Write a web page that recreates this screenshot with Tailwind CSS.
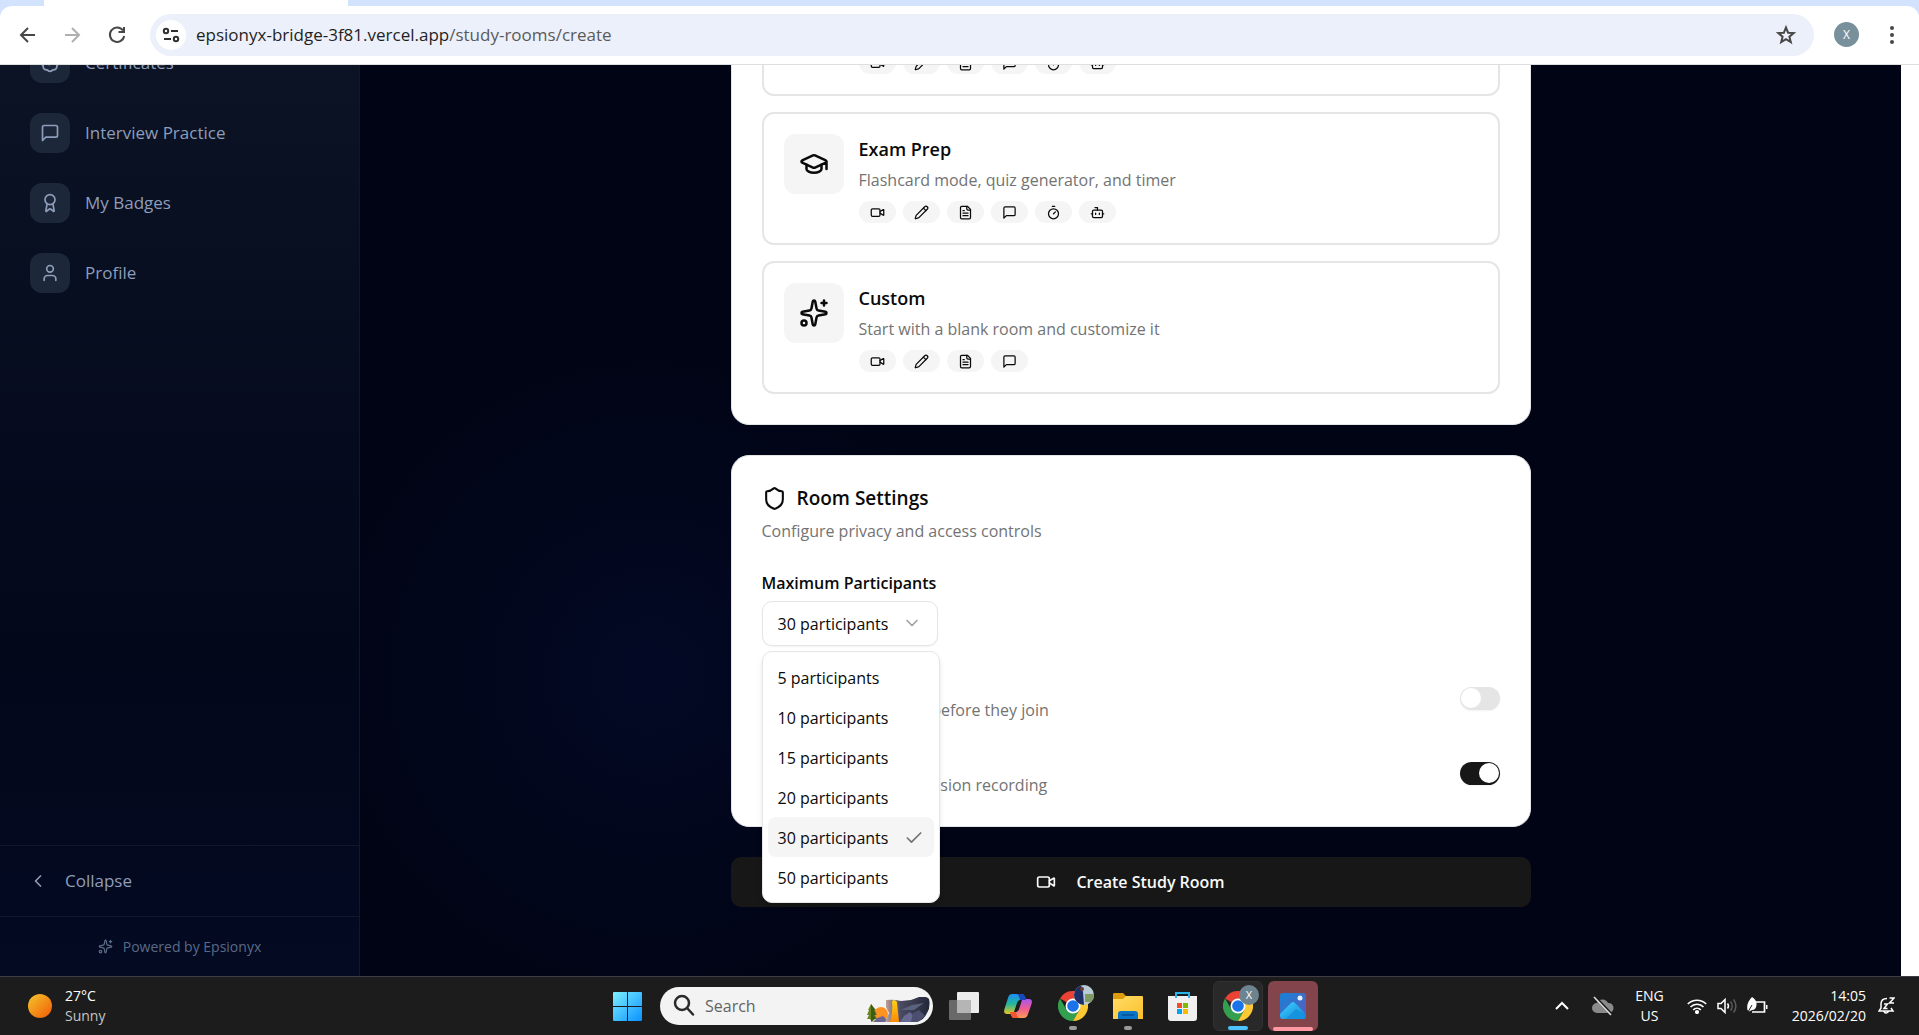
<!DOCTYPE html>
<html lang="en">
  <head>
    <meta charset="UTF-8" />
    <meta name="viewport" content="width=device-width, initial-scale=1.0" />
    <title>Create Study Room</title>
    <script src="https://cdn.jsdelivr.net/npm/@tailwindcss/browser@4"></script>
  </head>
  <body
    class="h-screen flex flex-col overflow-hidden bg-white font-['Open_Sans','Noto_Sans',sans-serif] text-base text-neutral-950"
  >
    <!-- Icon set -->
    <svg class="hidden">
      <defs>
        <symbol id="i-video" viewBox="0 0 24 24">
          <path d="m16 13 5.223 3.482a.5.5 0 0 0 .777-.416V7.87a.5.5 0 0 0-.752-.432L16 10.5" />
          <rect x="2" y="6" width="14" height="12" rx="2" />
        </symbol>
        <symbol id="i-pencil" viewBox="0 0 24 24">
          <path d="M21.174 6.812a1 1 0 0 0-3.986-3.987L3.842 16.174a2 2 0 0 0-.5.83l-1.321 4.352a.5.5 0 0 0 .623.622l4.353-1.32a2 2 0 0 0 .83-.497z" />
          <path d="m15 5 4 4" />
        </symbol>
        <symbol id="i-file" viewBox="0 0 24 24">
          <path d="M15 2H6a2 2 0 0 0-2 2v16a2 2 0 0 0 2 2h12a2 2 0 0 0 2-2V7Z" />
          <path d="M14 2v4a2 2 0 0 0 2 2h4M10 9H8M16 13H8M16 17H8" />
        </symbol>
        <symbol id="i-message" viewBox="0 0 24 24">
          <path d="M21 15a2 2 0 0 1-2 2H7l-4 4V5a2 2 0 0 1 2-2h14a2 2 0 0 1 2 2z" />
        </symbol>
        <symbol id="i-timer" viewBox="0 0 24 24">
          <path d="M10 2h4M12 14l3-3" />
          <circle cx="12" cy="14" r="8" />
        </symbol>
        <symbol id="i-bot" viewBox="0 0 24 24">
          <path d="M12 8V4H8M2 14h2M20 14h2M15 13v2M9 13v2" />
          <rect x="4" y="8" width="16" height="12" rx="2" />
        </symbol>
        <symbol id="i-cap" viewBox="0 0 24 24">
          <path d="M21.42 10.922a1 1 0 0 0-.019-1.838L12.83 5.18a2 2 0 0 0-1.66 0L2.6 9.08a1 1 0 0 0 0 1.832l8.57 3.908a2 2 0 0 0 1.66 0zM22 10v6" />
          <path d="M6 12.5V16a6 3 0 0 0 12 0v-3.5" />
        </symbol>
        <symbol id="i-sparkles" viewBox="0 0 24 24">
          <path d="M11.017 2.814a1 1 0 0 1 1.966 0l1.051 5.558a2 2 0 0 0 1.594 1.594l5.558 1.051a1 1 0 0 1 0 1.966l-5.558 1.051a2 2 0 0 0-1.594 1.594l-1.051 5.558a1 1 0 0 1-1.966 0l-1.051-5.558a2 2 0 0 0-1.594-1.594l-5.558-1.051a1 1 0 0 1 0-1.966l5.558-1.051a2 2 0 0 0 1.594-1.594z" />
          <path d="M20 2v4M22 4h-4" />
          <circle cx="4" cy="20" r="2" />
        </symbol>
        <symbol id="i-badge" viewBox="0 0 24 24">
          <path d="M3.85 8.62a4 4 0 0 1 4.78-4.77 4 4 0 0 1 6.74 0 4 4 0 0 1 4.78 4.78 4 4 0 0 1 0 6.74 4 4 0 0 1-4.77 4.78 4 4 0 0 1-6.75 0 4 4 0 0 1-4.78-4.77 4 4 0 0 1 0-6.76Z" />
          <path d="m9 12 2 2 4-4" />
        </symbol>
        <symbol id="i-award" viewBox="0 0 24 24">
          <path d="m15.477 12.89 1.515 8.526a.5.5 0 0 1-.81.47l-3.58-2.687a1 1 0 0 0-1.197 0l-3.586 2.686a.5.5 0 0 1-.81-.469l1.514-8.526" />
          <circle cx="12" cy="8" r="6" />
        </symbol>
        <symbol id="i-user" viewBox="0 0 24 24">
          <path d="M19 21v-2a4 4 0 0 0-4-4H9a4 4 0 0 0-4 4v2" />
          <circle cx="12" cy="7" r="4" />
        </symbol>
        <symbol id="i-shield" viewBox="0 0 24 24">
          <path d="M20 13c0 5-3.5 7.5-7.66 8.95a1 1 0 0 1-.67-.01C7.5 20.5 4 18 4 13V6a1 1 0 0 1 1-1c2 0 4.5-1.2 6.24-2.72a1.17 1.17 0 0 1 1.52 0C14.51 3.81 17 5 19 5a1 1 0 0 1 1 1z" />
        </symbol>
        <symbol id="i-chrome" viewBox="0 0 30 30">
          <path d="M15 15 2 7.500A15 15 0 0 1 28 7.500L15 7.500Z" fill="#ea4335" />
          <path d="M2 7.500A15 15 0 0 0 15 30L21.500 18.700 15 15 8.500 18.700Z" fill="#34a04f" />
          <path d="M28 7.500A15 15 0 0 1 15 30L21.500 18.750 15 7.500Z" fill="#fcc934" />
          <circle cx="15" cy="15" r="7.500" fill="#fff" />
          <circle cx="15" cy="15" r="5.800" fill="#1a73e8" />
        </symbol>
      </defs>
    </svg>

    <!-- Browser chrome -->
    <header class="shrink-0 bg-[#d3e3fd]">
      <div class="flex h-[6px] pl-11">
        <div class="w-[304px] bg-white"></div>
      </div>
      <div class="flex items-center h-[59px] pb-px pl-4 pr-[17px] bg-white rounded-t-xl border-b border-[#dfdfdf]">
        <button aria-label="Back" class="w-6 mr-5">
          <svg class="size-6" viewBox="0 0 24 24" fill="none" stroke="#474747" stroke-width="2"><path d="M19 12H5M12 5l-7 7 7 7" /></svg>
        </button>
        <button aria-label="Forward" class="w-6 mr-[21px]">
          <svg class="size-6" viewBox="0 0 24 24" fill="none" stroke="#b0b0b0" stroke-width="2"><path d="M5 12h14M12 5l7 7-7 7" /></svg>
        </button>
        <button aria-label="Reload" class="w-6 mr-[21px]">
          <svg class="size-6" viewBox="0 0 24 24" fill="none" stroke="#474747" stroke-width="2"><path d="M18 7.500A7.200 7.200 0 1 0 19.200 13M19 4v5h-5.500" /></svg>
        </button>
        <div class="flex flex-1 items-center h-[42px] pl-[6px] pr-4 rounded-full bg-[#ecf0fa]">
          <button aria-label="Site information" class="flex items-center justify-center size-[30px] mr-2.5 rounded-full bg-white">
            <svg class="size-5" viewBox="0 0 20 20" fill="none" stroke="#303030" stroke-width="2"><circle cx="5" cy="6" r="2.200" /><path d="M10 6h7M3 14h7" /><circle cx="15" cy="14" r="2.200" /></svg>
          </button>
          <div class="flex-1 text-[17px]"><span class="text-[#1f1f1f]">epsionyx-bridge-3f81.vercel.app</span><span class="text-[#5a5a5a]">/study-rooms/create</span></div>
          <button aria-label="Bookmark">
            <svg class="size-6" viewBox="0 0 24 24" fill="none" stroke="#474747" stroke-width="2"><path d="m12 4.500 2.100 5.200 5.600.4-4.300 3.600 1.400 5.500-4.800-3-4.800 3 1.400-5.500-4.300-3.600 5.600-.4z" /></svg>
          </button>
        </div>
        <button class="flex items-center justify-center size-[25px] ml-5 rounded-full bg-[#78909c] text-[12px] text-white">X</button>
        <button aria-label="Menu" class="ml-[23px]">
          <svg class="w-5 h-6" viewBox="0 0 20 24" fill="#474747"><circle cx="10" cy="5" r="2" /><circle cx="10" cy="12" r="2" /><circle cx="10" cy="19" r="2" /></svg>
        </button>
      </div>
    </header>

    <div class="flex flex-1 min-h-0 pr-[18px]">
      <!-- Sidebar -->
      <aside class="flex flex-col shrink-0 w-[360px] border-r border-[#10182a] bg-linear-to-b from-[#0b1324] via-[#03071a] via-65% to-[#030a22] text-[17px] text-[#8e9dba] font-medium">
        <nav class="flex-1 min-h-0 overflow-hidden pl-[30px]">
          <ul class="-mt-[22px] flex flex-col gap-[30px]">
            <li>
              <a href="#certificates" class="flex items-center gap-[15px]">
                <span class="flex items-center justify-center size-10 rounded-xl bg-[#1c283a]"><svg class="size-5" fill="none" stroke="currentColor" stroke-width="2" stroke-linecap="round" stroke-linejoin="round"><use href="#i-badge" /></svg></span>
                Certificates
              </a>
            </li>
            <li>
              <a href="#interview" class="flex items-center gap-[15px]">
                <span class="flex items-center justify-center size-10 rounded-xl bg-[#1c283a]"><svg class="size-5" fill="none" stroke="currentColor" stroke-width="2" stroke-linecap="round" stroke-linejoin="round"><use href="#i-message" /></svg></span>
                Interview Practice
              </a>
            </li>
            <li>
              <a href="#badges" class="flex items-center gap-[15px]">
                <span class="flex items-center justify-center size-10 rounded-xl bg-[#1c283a]"><svg class="size-5" fill="none" stroke="currentColor" stroke-width="2" stroke-linecap="round" stroke-linejoin="round"><use href="#i-award" /></svg></span>
                My Badges
              </a>
            </li>
            <li>
              <a href="#profile" class="flex items-center gap-[15px]">
                <span class="flex items-center justify-center size-10 rounded-xl bg-[#1c283a]"><svg class="size-5" fill="none" stroke="currentColor" stroke-width="2" stroke-linecap="round" stroke-linejoin="round"><use href="#i-user" /></svg></span>
                Profile
              </a>
            </li>
          </ul>
        </nav>
        <div class="border-t border-[#10182a] h-[71px] flex items-center pl-7">
          <button class="flex items-center gap-[17px]">
            <svg class="size-5" viewBox="0 0 24 24" fill="none" stroke="currentColor" stroke-width="2" stroke-linecap="round" stroke-linejoin="round"><path d="m15 18-6-6 6-6" /></svg>
            Collapse
          </button>
        </div>
        <div class="border-t border-[#10182a] h-[60px] flex items-center justify-center gap-2.5 text-sm font-normal text-[#5b6a85]">
          <svg class="size-[15px]" fill="none" stroke="currentColor" stroke-width="2" stroke-linecap="round" stroke-linejoin="round"><use href="#i-sparkles" /></svg>
          Powered by Epsionyx
        </div>
      </aside>

      <!-- Page content, scrolled to its end -->
      <main class="flex flex-1 flex-col items-center justify-end min-w-0 overflow-hidden pb-[69px] bg-[#010414] bg-[radial-gradient(circle_340px_at_290px_610px,#030925,#010414)]">
        <form class="flex flex-col gap-[30px] w-full max-w-[800px]">
          <section class="flex flex-col gap-4 rounded-[18px] border border-neutral-200 bg-white p-[30px]">
            <article class="flex gap-[15px] rounded-xl border-2 border-neutral-200 p-5">
              <div class="size-[60px] shrink-0"></div>
              <div class="pt-[67px]">
                <ul class="flex gap-[7px]">
                  <li class="flex items-center justify-center w-[37px] h-[22px] rounded-full bg-neutral-100"><svg class="size-[15px]" fill="none" stroke="currentColor" stroke-width="2" stroke-linecap="round" stroke-linejoin="round"><use href="#i-video" /></svg></li>
                  <li class="flex items-center justify-center w-[37px] h-[22px] rounded-full bg-neutral-100"><svg class="size-[15px]" fill="none" stroke="currentColor" stroke-width="2" stroke-linecap="round" stroke-linejoin="round"><use href="#i-pencil" /></svg></li>
                  <li class="flex items-center justify-center w-[37px] h-[22px] rounded-full bg-neutral-100"><svg class="size-[15px]" fill="none" stroke="currentColor" stroke-width="2" stroke-linecap="round" stroke-linejoin="round"><use href="#i-file" /></svg></li>
                  <li class="flex items-center justify-center w-[37px] h-[22px] rounded-full bg-neutral-100"><svg class="size-[15px]" fill="none" stroke="currentColor" stroke-width="2" stroke-linecap="round" stroke-linejoin="round"><use href="#i-message" /></svg></li>
                  <li class="flex items-center justify-center w-[37px] h-[22px] rounded-full bg-neutral-100"><svg class="size-[15px]" fill="none" stroke="currentColor" stroke-width="2" stroke-linecap="round" stroke-linejoin="round"><use href="#i-timer" /></svg></li>
                  <li class="flex items-center justify-center w-[37px] h-[22px] rounded-full bg-neutral-100"><svg class="size-[15px]" fill="none" stroke="currentColor" stroke-width="2" stroke-linecap="round" stroke-linejoin="round"><use href="#i-bot" /></svg></li>
                </ul>
              </div>
            </article>

            <article class="flex gap-[15px] rounded-xl border-2 border-neutral-200 p-5">
              <div class="flex items-center justify-center size-[60px] shrink-0 rounded-xl bg-neutral-100">
                <svg class="size-[30px]" fill="none" stroke="currentColor" stroke-width="2" stroke-linecap="round" stroke-linejoin="round"><use href="#i-cap" /></svg>
              </div>
              <div>
                <h3 class="text-lg leading-[30px] font-semibold">Exam Prep</h3>
                <p class="mt-1 leading-[25px] text-neutral-500">Flashcard mode, quiz generator, and timer</p>
                <ul class="mt-2 flex gap-[7px]">
                  <li class="flex items-center justify-center w-[37px] h-[22px] rounded-full bg-neutral-100"><svg class="size-[15px]" fill="none" stroke="currentColor" stroke-width="2" stroke-linecap="round" stroke-linejoin="round"><use href="#i-video" /></svg></li>
                  <li class="flex items-center justify-center w-[37px] h-[22px] rounded-full bg-neutral-100"><svg class="size-[15px]" fill="none" stroke="currentColor" stroke-width="2" stroke-linecap="round" stroke-linejoin="round"><use href="#i-pencil" /></svg></li>
                  <li class="flex items-center justify-center w-[37px] h-[22px] rounded-full bg-neutral-100"><svg class="size-[15px]" fill="none" stroke="currentColor" stroke-width="2" stroke-linecap="round" stroke-linejoin="round"><use href="#i-file" /></svg></li>
                  <li class="flex items-center justify-center w-[37px] h-[22px] rounded-full bg-neutral-100"><svg class="size-[15px]" fill="none" stroke="currentColor" stroke-width="2" stroke-linecap="round" stroke-linejoin="round"><use href="#i-message" /></svg></li>
                  <li class="flex items-center justify-center w-[37px] h-[22px] rounded-full bg-neutral-100"><svg class="size-[15px]" fill="none" stroke="currentColor" stroke-width="2" stroke-linecap="round" stroke-linejoin="round"><use href="#i-timer" /></svg></li>
                  <li class="flex items-center justify-center w-[37px] h-[22px] rounded-full bg-neutral-100"><svg class="size-[15px]" fill="none" stroke="currentColor" stroke-width="2" stroke-linecap="round" stroke-linejoin="round"><use href="#i-bot" /></svg></li>
                </ul>
              </div>
            </article>

            <article class="flex gap-[15px] rounded-xl border-2 border-neutral-200 p-5">
              <div class="flex items-center justify-center size-[60px] shrink-0 rounded-xl bg-neutral-100">
                <svg class="size-[30px]" fill="none" stroke="currentColor" stroke-width="2" stroke-linecap="round" stroke-linejoin="round"><use href="#i-sparkles" /></svg>
              </div>
              <div>
                <h3 class="text-lg leading-[30px] font-semibold">Custom</h3>
                <p class="mt-1 leading-[25px] text-neutral-500">Start with a blank room and customize it</p>
                <ul class="mt-2 flex gap-[7px]">
                  <li class="flex items-center justify-center w-[37px] h-[22px] rounded-full bg-neutral-100"><svg class="size-[15px]" fill="none" stroke="currentColor" stroke-width="2" stroke-linecap="round" stroke-linejoin="round"><use href="#i-video" /></svg></li>
                  <li class="flex items-center justify-center w-[37px] h-[22px] rounded-full bg-neutral-100"><svg class="size-[15px]" fill="none" stroke="currentColor" stroke-width="2" stroke-linecap="round" stroke-linejoin="round"><use href="#i-pencil" /></svg></li>
                  <li class="flex items-center justify-center w-[37px] h-[22px] rounded-full bg-neutral-100"><svg class="size-[15px]" fill="none" stroke="currentColor" stroke-width="2" stroke-linecap="round" stroke-linejoin="round"><use href="#i-file" /></svg></li>
                  <li class="flex items-center justify-center w-[37px] h-[22px] rounded-full bg-neutral-100"><svg class="size-[15px]" fill="none" stroke="currentColor" stroke-width="2" stroke-linecap="round" stroke-linejoin="round"><use href="#i-message" /></svg></li>
                </ul>
              </div>
            </article>
          </section>

          <section class="rounded-[18px] border border-neutral-200 bg-white px-[30px] pt-[30px] pb-7">
            <h2 class="flex items-center gap-2.5 text-[19px] leading-[25px] font-semibold">
              <svg class="size-[25px]" fill="none" stroke="currentColor" stroke-width="2" stroke-linecap="round" stroke-linejoin="round"><use href="#i-shield" /></svg>
              Room Settings
            </h2>
            <p class="mt-2 leading-[25px] text-neutral-500">Configure privacy and access controls</p>

            <label for="maxParticipants" class="block mt-[29px] leading-[20px] font-semibold">Maximum Participants</label>
            <div class="relative mt-2 w-fit">
              <select id="maxParticipants" class="block w-[176px] h-[45px] appearance-none rounded-[10px] border border-neutral-200 bg-white px-[15px] shadow-xs">
                <option>5 participants</option>
                <option>10 participants</option>
                <option>15 participants</option>
                <option>20 participants</option>
                <option selected>30 participants</option>
                <option>50 participants</option>
              </select>
              <svg class="absolute right-4 top-3 size-5 text-neutral-400 pointer-events-none" viewBox="0 0 24 24" fill="none" stroke="currentColor" stroke-width="2" stroke-linecap="round" stroke-linejoin="round"><path d="m6 9 6 6 6-6" /></svg>

              <ul role="listbox" aria-label="Maximum Participants" class="absolute left-0 top-full z-10 mt-[5px] w-[178px] rounded-[10px] border border-neutral-200 bg-white p-[5px] shadow-md">
                <li role="option" class="flex items-center h-10 px-2.5 pt-0.5 whitespace-nowrap">5 participants</li>
                <li role="option" class="flex items-center h-10 px-2.5 pt-0.5 whitespace-nowrap">10 participants</li>
                <li role="option" class="flex items-center h-10 px-2.5 pt-0.5 whitespace-nowrap">15 participants</li>
                <li role="option" class="flex items-center h-10 px-2.5 pt-0.5 whitespace-nowrap">20 participants</li>
                <li role="option" aria-selected="true" class="flex items-center justify-between h-10 px-2.5 pt-0.5 rounded-lg bg-neutral-100 whitespace-nowrap">
                  30 participants
                  <svg class="size-5 text-neutral-500" viewBox="0 0 24 24" fill="none" stroke="currentColor" stroke-width="2" stroke-linecap="round" stroke-linejoin="round"><path d="M20 6 9 17l-5-5" /></svg>
                </li>
                <li role="option" class="flex items-center h-10 px-2.5 pt-0.5 whitespace-nowrap">50 participants</li>
              </ul>
            </div>

            <div class="mt-[27px] flex items-center justify-between">
              <label for="approval" class="pl-2.5 pt-[25px] leading-[25px] text-neutral-500">Approve participants before they join</label>
              <input id="approval" type="checkbox" role="switch" class="appearance-none flex items-center w-10 h-[23px] px-px rounded-full bg-neutral-200 shadow-xs before:size-5 before:rounded-full before:bg-white checked:justify-end checked:bg-neutral-900" />
            </div>
            <div class="mt-[25px] flex items-center justify-between">
              <label for="recording" class="pl-2.5 pt-[25px] leading-[25px] text-neutral-500">Enable and disable session recording</label>
              <input id="recording" type="checkbox" role="switch" checked class="appearance-none flex items-center w-10 h-[23px] px-px rounded-full bg-neutral-200 shadow-xs before:size-5 before:rounded-full before:bg-white checked:justify-end checked:bg-neutral-900" />
            </div>
          </section>

          <button type="button" class="flex items-center justify-center gap-5 h-[50px] rounded-[10px] bg-neutral-900 font-semibold text-neutral-50">
            <svg class="size-5" fill="none" stroke="currentColor" stroke-width="2" stroke-linecap="round" stroke-linejoin="round"><use href="#i-video" /></svg>
            Create Study Room
          </button>
        </form>
      </main>
    </div>

    <!-- Taskbar -->
    <footer class="grid grid-cols-[1fr_auto_1fr] items-center shrink-0 h-[59px] pl-7 pr-6 border-t border-[#403d44] bg-[#1c1c1c] text-white text-sm leading-5">
      <div class="flex items-center gap-[13px]">
        <svg class="size-6" viewBox="0 0 24 24">
          <defs><linearGradient id="sun" x2="1" y2="1"><stop stop-color="#f5c62c" /><stop offset="1" stop-color="#f05a06" /></linearGradient></defs>
          <circle cx="12" cy="12" r="12" fill="url(#sun)" />
        </svg>
        <div>
          <p>27°C</p>
          <p class="text-[#c4c4c4]">Sunny</p>
        </div>
      </div>

      <div class="flex items-center pl-2">
        <button aria-label="Start" class="mr-[18px]">
          <svg class="size-[29px]" viewBox="0 0 29 29">
            <defs><linearGradient id="win" x2="29" y2="29" gradientUnits="userSpaceOnUse"><stop stop-color="#7df0ff" /><stop offset="1" stop-color="#0a91ff" /></linearGradient></defs>
            <path fill="url(#win)" d="M1 0h13v14H0V1a1 1 0 0 1 1-1zM15 0h13a1 1 0 0 1 1 1v13H15zM0 15h14v14H1a1 1 0 0 1-1-1zM15 15h14v13a1 1 0 0 1-1 1H15z" />
          </svg>
        </button>
        <div class="flex items-center w-[273px] h-[38px] pl-3 pr-[3px] rounded-full bg-[#f3f3f3]">
          <svg class="size-6 shrink-0" viewBox="0 0 24 24" fill="none" stroke="#2b2b2b" stroke-width="2.500" stroke-linecap="round"><circle cx="10" cy="9" r="7" /><path d="m15.500 14.500 5.500 6" /></svg>
          <input aria-label="Search" placeholder="Search" class="min-w-0 flex-1 pl-[9px] bg-transparent text-base text-neutral-800 placeholder:text-[#646464] outline-none" />
          <svg class="w-[63px] h-[26px] mt-2 shrink-0" viewBox="0 0 63 26">
            <defs>
              <linearGradient id="rock" x2="1"><stop stop-color="#c3a69c" /><stop offset=".35" stop-color="#4a4a60" /><stop offset="1" stop-color="#232839" /></linearGradient>
              <linearGradient id="fall" x2="0" y2="1"><stop stop-color="#ffd21c" /><stop offset="1" stop-color="#ff8a00" /></linearGradient>
              <clipPath id="pill"><path d="M0 0h63q1 25-16 25H0z" /></clipPath>
            </defs>
            <g clip-path="url(#pill)">
              <circle cx="14" cy="17" r="7" fill="#ff9322" />
              <path d="M4 7 1 13h1l-2 5h2l-2 4h3l2 3 3-3h2l-2-4h2l-2-5h1z" fill="#6b861f" />
              <path d="M4 7v18l3-3h2l-2-4h2l-2-5h1z" fill="#3d5c1c" />
              <path d="m6 25 4-4 6-2 6 6z" fill="#6b6690" />
              <path d="M19 3q7-1 15 1l10-1 8-3q8-1 10 2 2 9-2 14-4 9-13 9H18l4-9-3-6z" fill="url(#rock)" />
              <path d="M26 3q4 0 4 3l2 19h-9q3-11 2-20z" fill="url(#fall)" />
              <path d="m33 25 4-6 6-4 9 10z" fill="#686a94" />
              <path d="m44 25 2-9 6-3 6 6-7 6z" fill="#4b4e6f" />
              <path d="m34 13 11-5 12-2-10 7z" fill="#5b627c" />
            </g>
          </svg>
        </div>

        <button aria-label="Task view" class="ml-[16px] mr-[25px]">
          <svg class="w-[30px] h-[28px]" viewBox="0 0 30 28">
            <rect x="8" width="22" height="21" rx="1" fill="#ececec" />
            <rect y="8" width="22" height="20" rx="1" fill="#777" fill-opacity=".85" />
            <path d="M8 8h14v13H8z" fill="#b5b5b5" />
          </svg>
        </button>
        <button aria-label="Copilot" class="mr-[26px]">
          <svg class="w-[28px] h-[26px]" viewBox="0 0 28 26">
            <defs>
              <linearGradient id="cpa" x2="0" y2="1"><stop stop-color="#1d8df5" /><stop offset=".5" stop-color="#23b89c" /><stop offset="1" stop-color="#e8c51d" /></linearGradient>
              <linearGradient id="cpb" x2="0" y2="1"><stop stop-color="#a857f0" /><stop offset=".5" stop-color="#ee5c94" /><stop offset="1" stop-color="#ff9a55" /></linearGradient>
            </defs>
            <path d="M8 1h10q2 0 3 3l1 3h-6q-2 0-3 3l-3 9q-1 2-3 2H3q-4 0-2.500-5L4 5q1-4 4-4z" fill="url(#cpa)" />
            <path d="M20 25H10q-2 0-3-3l-1-3h6q2 0 3-3l3-9q1-1 3-1h4q4 0 2.500 5L24 21q-1 4-4 4z" fill="url(#cpb)" />
            <path d="M13 1h5q2 0 3 3l1 3h-6q-1-5-3-6z" fill="#1b46bb" />
            <path d="M15 25h-5q-2 0-3-3l-1-3h6q1 5 3 6z" fill="#f4542f" />
            <path d="M14 9h3l-3 9h-3z" fill="#1c1c1c" />
          </svg>
        </button>
        <button aria-label="Chrome" class="relative mr-[25px]">
          <svg class="size-[30px]"><use href="#i-chrome" /></svg>
          <svg class="absolute left-4 -top-1.5 size-5" viewBox="0 0 20 20">
            <clipPath id="face"><circle cx="10" cy="10" r="10" /></clipPath>
            <g clip-path="url(#face)"><rect width="20" height="20" fill="#b9cbd6" /><path d="M11 9h9v8h-9z" fill="#7d9b62" /><path d="M3 0h4l2 7 1 13H0V8z" fill="#1d2f66" /><circle cx="8" cy="4" r="2" fill="#6b3d2e" /></g>
          </svg>
          <span class="absolute left-[11px] top-[35px] w-2 h-1 rounded-full bg-[#9a9a9a]"></span>
        </button>
        <button aria-label="File Explorer" class="relative mr-[25px]">
          <svg class="w-[30px] h-[28px]" viewBox="0 0 30 28">
            <defs><linearGradient id="fold" x2="1" y2="1"><stop stop-color="#ffdc66" /><stop offset="1" stop-color="#fbc02d" /></linearGradient></defs>
            <path d="M1 1h9l3 3h16v8H0V2z" fill="#dd9c0c" />
            <path d="M0 7h10l3-3h16a1 1 0 0 1 1 1v22H0z" fill="url(#fold)" />
            <path d="M5 27v-5a3 3 0 0 1 3-3h14a3 3 0 0 1 3 3v5z" fill="#0a74c9" />
            <path d="M9 23h12" stroke="#0a3f77" stroke-width="1" />
          </svg>
          <span class="absolute left-[11px] top-[34px] w-2 h-1 rounded-full bg-[#9a9a9a]"></span>
        </button>
        <button aria-label="Microsoft Store" class="mr-4">
          <svg class="w-[29px] h-[29px]" viewBox="0 0 29 29">
            <path d="M0 4h29v22a3 3 0 0 1-3 3H3a3 3 0 0 1-3-3z" fill="#f0f0f0" />
            <path d="M8 6V1h13v5" fill="none" stroke="#28b3ea" stroke-width="2" />
            <path d="M9 11h5v5H9z" fill="#f25022" /><path d="M15 11h5v5h-5z" fill="#7fba00" /><path d="M9 17h5v5H9z" fill="#00a4ef" /><path d="M15 17h5v5h-5z" fill="#ffb900" />
          </svg>
        </button>
        <button aria-label="Chrome, profile X" class="relative flex items-center justify-center size-[50px] mr-[5px] rounded-md border border-[#323232] bg-[#292929]">
          <svg class="size-[30px]"><use href="#i-chrome" /></svg>
          <span class="absolute left-[25px] top-[3px] flex items-center justify-center size-5 rounded-full bg-[#6d838f] text-[11px] text-white">X</span>
          <span class="absolute left-[14px] bottom-0 w-5 h-1 rounded-full bg-[#4cc2ff]"></span>
        </button>
        <button aria-label="Photos" class="relative flex items-center justify-center size-[50px] rounded-md bg-[#83444b]">
          <svg class="size-[26px]" viewBox="0 0 26 26">
            <defs>
              <linearGradient id="pha" x2="1" y2="1"><stop stop-color="#1483d8" /><stop offset="1" stop-color="#6159b9" /></linearGradient>
              <linearGradient id="phb" x2="1" y2="1"><stop stop-color="#41d5ff" /><stop offset="1" stop-color="#0e7fd6" /></linearGradient>
              <clipPath id="phc"><rect width="26" height="26" rx="3" /></clipPath>
            </defs>
            <g clip-path="url(#phc)">
              <rect width="26" height="26" fill="url(#pha)" />
              <path d="M0 21 11 10q2-2 4 0l11 11v5H0z" fill="url(#phb)" />
              <path d="m6 26 9-9q1-1 3 0l8 8v1z" fill="#1593de" />
              <circle cx="20" cy="5" r="2.500" fill="#e6f1ff" />
            </g>
          </svg>
          <span class="absolute left-[5px] bottom-0 w-10 h-1 rounded-full bg-[#ff9aa5]"></span>
        </button>
      </div>

      <div class="flex items-center justify-end">
        <svg class="w-4 h-4 mr-[22px]" viewBox="0 0 16 16" fill="none" stroke="#fff" stroke-width="2"><path d="m2 11 6-6 6 6" /></svg>
        <svg class="w-[22px] h-5 mr-[21px]" viewBox="0 0 22 20"><path d="M5 17a5 5 0 0 1 0-10 6 6 0 0 1 11 0 5 5 0 0 1 1 10z" fill="#8a8a8a" /><path d="m3 1 17 18" stroke="#1c1c1c" stroke-width="3" /><path d="m2 1 17 18" stroke="#e4e4e4" stroke-width="1.500" /></svg>
        <div class="mr-[23px] text-center">
          <p>ENG</p>
          <p>US</p>
        </div>
        <svg class="w-5 h-4 mr-[10px]" viewBox="0 0 20 16" fill="none" stroke="#fff" stroke-width="1.600"><path d="M.8 6a13 13 0 0 1 18.400 0M3.500 9a9 9 0 0 1 13 0M6.200 11.800a5.500 5.500 0 0 1 7.600 0" /><circle cx="10" cy="14" r="1.300" fill="#fff" /></svg>
        <svg class="w-5 h-4 mr-[10px]" viewBox="0 0 20 16" fill="none" stroke="#fff" stroke-width="1.500"><path d="M1 5.500h3l4-4v13l-4-4H1z" /><path d="M10.500 5.500a4 4 0 0 1 0 5" /><path d="M13.500 3.500a7 7 0 0 1 0 9M16.500 1.500a10 10 0 0 1 0 13" stroke="#5c5c5c" /></svg>
        <svg class="w-[21px] h-[18px] mr-6" viewBox="0 0 21 18"><path d="M9 5h8.500v10H5" fill="none" stroke="#fff" stroke-width="1.700" /><path d="M19 8h1.500v4H19z" fill="#fff" /><path d="M5 0q5 3 4.500 8T5 13l-3 1.500L.500 13Q-1 6 5 0z" fill="#fff" /><path d="M1 15 5 8" stroke="#1c1c1c" /></svg>
        <div class="mr-3 text-right">
          <p>14:05</p>
          <p>2026/02/20</p>
        </div>
        <svg class="w-[17px] h-[18px]" viewBox="0 0 17 18" fill="none" stroke="#fff" stroke-width="1.500"><path d="M9 1.500Q3 1.500 3 7v4l-2 3h14l-2-3M6 14.500q2 3 4.500 0" /><path d="M6 7h3.500L6 11.500h3.500M11.500 1H16l-4.500 5H16" /></svg>
      </div>
    </footer>
  </body>
</html>
